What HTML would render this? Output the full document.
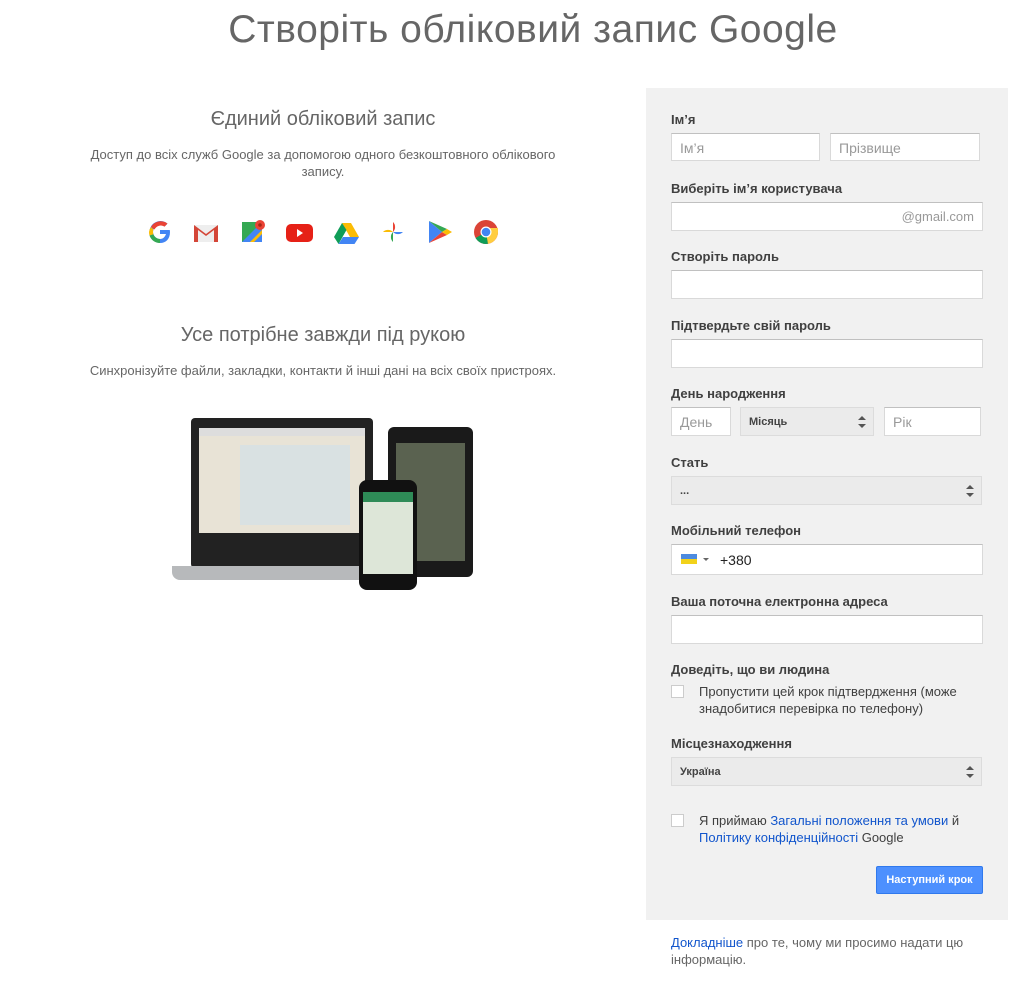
<!DOCTYPE html>
<html><head><meta charset="utf-8"><style>
*{box-sizing:border-box;margin:0;padding:0}
body{width:1032px;height:1006px;background:#fff;font-family:"Liberation Sans",Arial,sans-serif;color:#404040;position:relative;overflow:hidden}
.a{position:absolute}
h1{position:absolute;left:0;width:1066px;text-align:center;top:8px;font-weight:normal;font-size:39px;color:#666;letter-spacing:0.5px}
.h2{position:absolute;left:0;width:646px;text-align:center;font-size:20px;color:#666}
.p{position:absolute;left:70px;width:506px;text-align:center;font-size:13px;line-height:17px;color:#666}
.panel{position:absolute;left:646px;top:88px;width:362px;height:832px;background:#f1f1f1}
.lb{position:absolute;left:671px;font-size:13px;font-weight:bold;color:#404040}
.in{position:absolute;background:#fff;border:1px solid #d9d9d9;border-top-color:#c0c0c0;font-size:14px;color:#999;padding:7px 8px;line-height:14px}
.sel{position:absolute;background:#ebebeb;border:1px solid #dcdcdc;font-size:11px;font-weight:bold;color:#444;padding:0 8px;display:flex;align-items:center}
.sel:after{content:"";position:absolute;right:7px;top:50%;margin-top:-6px;width:0;height:0;border-left:4px solid transparent;border-right:4px solid transparent;border-bottom:4px solid #555}
.sel:before{content:"";position:absolute;right:7px;top:50%;margin-top:2px;width:0;height:0;border-left:4px solid transparent;border-right:4px solid transparent;border-top:4px solid #555}
.cb{position:absolute;left:671px;width:13px;height:13px;background:#fff;border:1px solid #ccc}
.t{position:absolute;font-size:13px;line-height:17px;color:#404040}
a{color:#15c;text-decoration:none}
</style></head><body>
<h1>Створіть обліковий запис Google</h1>
<div class="h2" style="top:108px">Єдиний обліковий запис</div>
<div class="p" style="top:146px">Доступ до всіх служб Google за допомогою одного безкоштовного облікового запису.</div>
<svg class="a" style="left:146px;top:218px" width="360" height="28" viewBox="0 0 360 28">
<g transform="translate(2,2)"><path d="M12 10v4h6c-1 3-3 5-6 5a7 7 0 1 1 4.5-12.4l3-3A11 11 0 1 0 12 23c6 0 10-4 10-11l-.2-2z" fill="#4285f4"/><path d="M3 7l3.5 2.5A7 7 0 0 1 16.5 6.6l3-3A11 11 0 0 0 3 7z" fill="#ea4335"/><path d="M1.5 15.5A11 11 0 0 0 12 23v-4a7 7 0 0 1-6.6-4.8z" fill="#34a853"/><path d="M1 12c0 1.3.2 2.4.5 3.5l3.9-1.3A7 7 0 0 1 5 12c0-.9.1-1.7.5-2.5L3 7A11 11 0 0 0 1 12z" fill="#fbbc05"/></g>
<g transform="translate(48,4)"><rect x="0" y="3" width="24" height="17" fill="#eee"/><path d="M0 3v17h4V8l8 6 8-6v12h4V3l-12 9z" fill="#d44638"/></g>
<g transform="translate(96,2)"><rect x="0" y="2" width="20" height="20" fill="#34a853"/><path d="M0 22L20 2v20z" fill="#4285f4"/><path d="M8 22l12-12v4L12 22z" fill="#fbbc05"/><circle cx="18" cy="5" r="5" fill="#ea4335"/><circle cx="18" cy="5" r="1.8" fill="#a52714"/></g>
<g transform="translate(140,4)"><rect x="0" y="2" width="27" height="18" rx="5" fill="#e62117"/><path d="M11 7v8l6-4z" fill="#fff"/></g>
<g transform="translate(188,3)"><path d="M8 2h9l8 14h-9z" fill="#fbbc05"/><path d="M8 2L0 16l4.5 7L12.5 9z" fill="#0f9d58"/><path d="M4.5 23h16L25 16H9z" fill="#4285f4"/></g>
<g transform="translate(236,3)"><path d="M11 11V1a7 7 0 0 1 0 10z" fill="#ea4335"/><path d="M11 11h10a7 7 0 0 1-10 0z" fill="#4285f4"/><path d="M11 11v10a7 7 0 0 1 0-10z" fill="#34a853"/><path d="M11 11H1a7 7 0 0 1 10 0z" fill="#fbbc05"/></g>
<g transform="translate(283,3)"><path d="M0 0l13 11L0 22z" fill="#4285f4"/><path d="M0 0l18 8-5 3z" fill="#34a853"/><path d="M0 22l18-8-5-3z" fill="#ea4335"/><path d="M18 8l5 3-5 3-5-3z" fill="#fbbc05"/></g>
<g transform="translate(328,2)"><circle cx="12" cy="12" r="12" fill="#db4437"/><path d="M12 12L1.6 18A12 12 0 0 0 14 23.8z" fill="#0f9d58"/><path d="M12 12L14 23.8A12 12 0 0 0 24 12V8H12z" fill="#ffcd40"/><circle cx="12" cy="12" r="5.5" fill="#fff"/><circle cx="12" cy="12" r="4.3" fill="#4285f4"/></g>
</svg>
<div class="h2" style="top:324px">Усе потрібне завжди під рукою</div>
<div class="p" style="top:362px;left:60px;width:526px">Синхронізуйте файли, закладки, контакти й інші дані на всіх своїх пристроях.</div>
<div class="a" style="left:191px;top:418px;width:182px;height:150px;background:#222;border-radius:4px"></div>
<div class="a" style="left:199px;top:428px;width:166px;height:105px;background:#e8e3d6"></div>
<div class="a" style="left:199px;top:428px;width:166px;height:8px;background:#ddd"></div>
<div class="a" style="left:240px;top:445px;width:110px;height:80px;background:#cfe0ea;opacity:.6"></div>
<div class="a" style="left:172px;top:566px;width:210px;height:14px;background:#b7b9bb;border-radius:0 0 8px 8px"></div>
<div class="a" style="left:388px;top:427px;width:85px;height:150px;background:#1a1a1a;border-radius:6px"></div>
<div class="a" style="left:396px;top:443px;width:69px;height:118px;background:#5a6250"></div>
<div class="a" style="left:359px;top:480px;width:58px;height:110px;background:#111;border-radius:8px"></div>
<div class="a" style="left:363px;top:492px;width:50px;height:82px;background:#dde6d8"></div>
<div class="a" style="left:363px;top:492px;width:50px;height:10px;background:#2e8b57"></div>

<div class="panel"></div>
<div class="lb" style="top:112px">Ім’я</div>
<div class="in" style="left:671px;top:133px;width:149px;height:28px">Ім’я</div>
<div class="in" style="left:830px;top:133px;width:150px;height:28px">Прізвище</div>
<div class="lb" style="top:181px">Виберіть ім’я користувача</div>
<div class="in" style="left:671px;top:202px;width:312px;height:29px;text-align:right;font-size:13px">@gmail.com</div>
<div class="lb" style="top:249px">Створіть пароль</div>
<div class="in" style="left:671px;top:270px;width:312px;height:29px"></div>
<div class="lb" style="top:318px">Підтвердьте свій пароль</div>
<div class="in" style="left:671px;top:339px;width:312px;height:29px"></div>
<div class="lb" style="top:386px">День народження</div>
<div class="in" style="left:671px;top:407px;width:60px;height:29px">День</div>
<div class="sel" style="left:740px;top:407px;width:134px;height:29px">Місяць</div>
<div class="in" style="left:884px;top:407px;width:97px;height:29px">Рік</div>
<div class="lb" style="top:455px">Стать</div>
<div class="sel" style="left:671px;top:476px;width:311px;height:29px">...</div>
<div class="lb" style="top:523px">Мобільний телефон</div>
<div class="in" style="left:671px;top:544px;width:312px;height:31px;color:#222;padding-left:48px;padding-top:8px">+380</div>
<div class="a" style="left:681px;top:554px;width:16px;height:5px;background:#4d8be0"></div>
<div class="a" style="left:681px;top:559px;width:16px;height:5px;background:#f2d21a"></div>
<div class="a" style="left:703px;top:558px;border-left:3px solid transparent;border-right:3px solid transparent;border-top:3px solid #666"></div>
<div class="lb" style="top:594px">Ваша поточна електронна адреса</div>
<div class="in" style="left:671px;top:615px;width:312px;height:29px"></div>
<div class="lb" style="top:662px">Доведіть, що ви людина</div>
<div class="cb" style="top:685px"></div>
<div class="t" style="left:699px;top:683px;width:280px">Пропустити цей крок підтвердження (може знадобитися перевірка по телефону)</div>
<div class="lb" style="top:736px">Місцезнаходження</div>
<div class="sel" style="left:671px;top:757px;width:311px;height:29px">Україна</div>
<div class="cb" style="top:814px"></div>
<div class="t" style="left:699px;top:812px;width:280px">Я приймаю <a>Загальні положення та умови</a> й <a>Політику конфіденційності</a> Google</div>
<div class="a" style="left:876px;top:866px;width:107px;height:28px;background:#4d90fe;border:1px solid #3079ed;border-radius:2px;color:#fff;font-size:11px;font-weight:bold;text-align:center;line-height:26px">Наступний крок</div>
<div class="t" style="left:671px;top:934px;width:320px;color:#666"><a>Докладніше</a> про те, чому ми просимо надати цю інформацію.</div>
</body></html>
